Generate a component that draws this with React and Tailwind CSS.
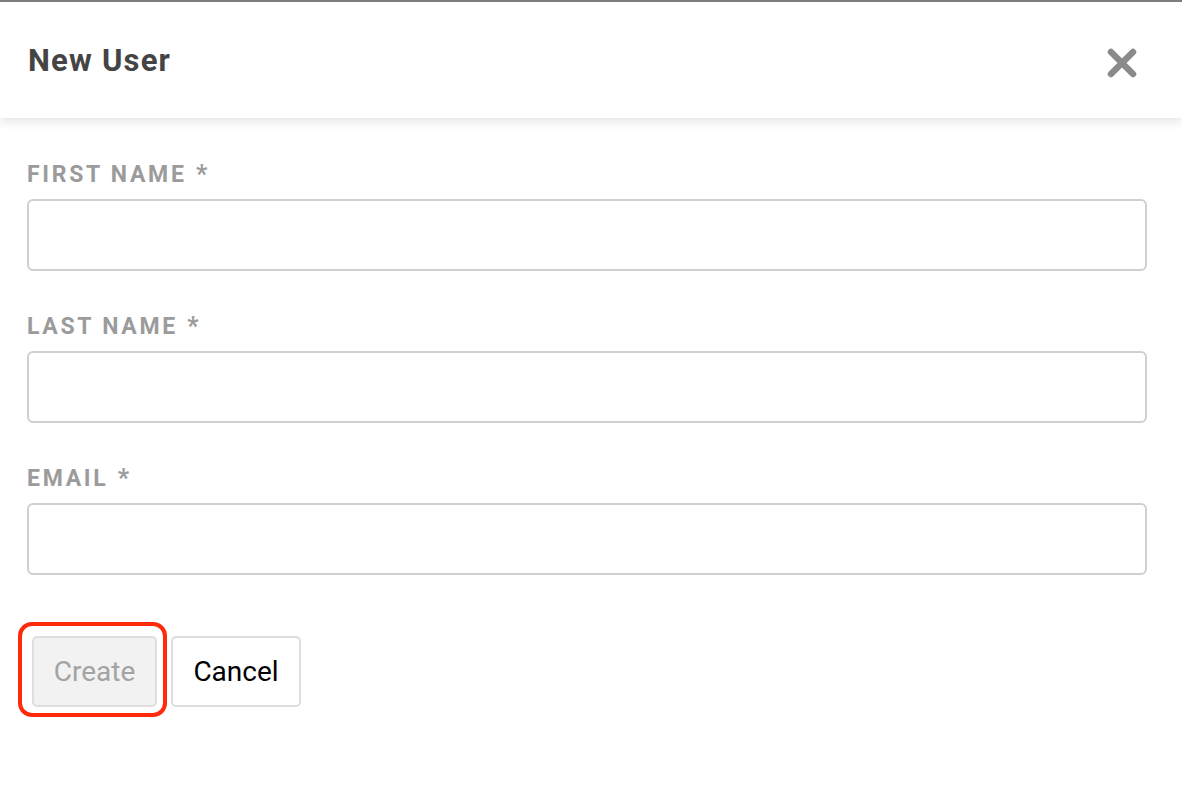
export default function App() {
  const fields = ["FIRST NAME", "LAST NAME", "EMAIL"];
  return (
    <div className="w-[1182px] h-[787px] bg-white overflow-hidden border-t-2 border-[#7d7d7d] relative" style={{ fontFamily: "Roboto, 'Liberation Sans', sans-serif" }}>
      <div className="h-[116px] flex items-center justify-between pl-[28px] pr-[44px] shadow-[0_3px_10px_rgba(0,0,0,0.12)] relative z-10 bg-white">
        <h1 className="text-[31px] font-bold text-[#444444] tracking-[1.2px] mt-[3px]">New User</h1>
        <svg width="32" height="32" viewBox="0 0 32 32" className="mt-[6px]">
          <path d="M5 5 L27 27 M27 5 L5 27" stroke="#8a8a8a" strokeWidth="6.5" strokeLinecap="round" />
        </svg>
      </div>
      <div className="pl-[27px] pr-[35px] pt-[42px]">
        {fields.map((f) => (
          <div key={f} className="mb-[41px]">
            <div className="h-[28px] pt-[2px] flex items-center text-[23px] leading-[28px] font-bold text-[#9b9b9b] tracking-[2.7px] mb-[11px] whitespace-pre">
              {f} <span className="ml-[1px] text-[25px] leading-[28px]">*</span>
            </div>
            <div className="h-[72px] border-2 border-[#cfcfcf] rounded-[6px] bg-white" />
          </div>
        ))}
        <div className="flex gap-[14px] pt-[20px] pl-[5px]">
          <div className="relative">
            <div className="absolute left-[-14px] top-[-14px] right-[-10px] bottom-[-10px] border-[4px] border-[#ff2a0a] rounded-[14px]" />
            <button className="w-[125px] h-[71px] bg-[#f2f2f2] border-2 border-[#dedede] rounded-[5px] text-[28px] text-[#a3a3a3]">Create</button>
          </div>
          <button className="w-[130px] h-[71px] bg-white border-2 border-[#dedede] rounded-[5px] text-[28px] text-black">Cancel</button>
        </div>
      </div>
    </div>
  );
}
